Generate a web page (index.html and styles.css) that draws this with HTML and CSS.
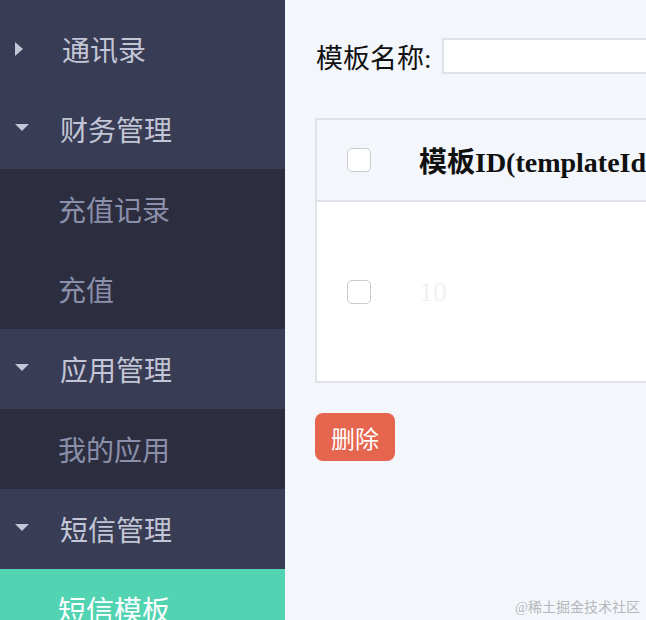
FILE: index.html
```html
<!DOCTYPE html>
<html lang="zh-CN">
<head>
    <meta charset="UTF-8">
    <title>短信模板</title>
    <link rel="stylesheet" href="styles.css">
</head>
<body>
    <div class="layout">
        <ul class="side-menu">
            <li class="menu-item"><span class="arrow arrow-right"></span>通讯录</li>
            <li class="menu-item"><span class="arrow arrow-down"></span>财务管理</li>
            <li class="sub-item">充值记录</li>
            <li class="sub-item">充值</li>
            <li class="menu-item"><span class="arrow arrow-down"></span>应用管理</li>
            <li class="sub-item">我的应用</li>
            <li class="menu-item"><span class="arrow arrow-down"></span>短信管理</li>
            <li class="sub-item active">短信模板</li>
        </ul>

        <div class="main">
            <div class="search-bar">
                <label class="search-label">模板名称:</label>
                <input class="search-input" type="text">
            </div>

            <table class="data-table">
                <thead>
                    <tr>
                        <th class="check-cell"><span class="checkbox"></span></th>
                        <th class="text-cell">模板ID(templateId)</th>
                    </tr>
                </thead>
                <tbody>
                    <tr>
                        <td class="check-cell"><span class="checkbox"></span></td>
                        <td class="text-cell id-cell">10</td>
                    </tr>
                </tbody>
            </table>

            <button class="del-btn">删除</button>

            <span class="watermark">@稀土掘金技术社区</span>
        </div>
    </div>
</body>
</html>
```

FILE: styles.css
```css
* {
    margin: 0;
    padding: 0;
    box-sizing: border-box;
}
ul,ol {
    list-style: none;
}
body {
    font-family: "Liberation Serif", "Noto Sans CJK SC", serif;
    background-color: #f3f6fa;
    overflow: hidden;
}
.layout {
    display: flex;
    height: 620px;
}

/* 左侧菜单 */
.side-menu {
    flex: 0 0 285px;
    padding-top: 9px;
    background-color: #383c54;
    font-family: "Noto Sans CJK SC", sans-serif;
    font-size: 28px;
}
.menu-item,.sub-item {
    display: flex;
    align-items: center;
    height: 80px;
}
.menu-item {
    padding-left: 15px;
    color: #c3c6d6;
    background-color: #383c54;
}
.sub-item {
    padding-left: 58px;
    color: #8b8fa9;
    background-color: #2c2e40;
}
.sub-item.active {
    color: #fff;
    background-color: #52d3b2;
}
.arrow {
    width: 0;
    height: 0;
    margin-right: 31px;
}
.arrow-right {
    margin-right: 39px;
    border-left: 8px solid #c3c6d6;
    border-top: 7px solid transparent;
    border-bottom: 7px solid transparent;
}
.arrow-down {
    border-top: 7px solid #c3c6d6;
    border-left: 7.5px solid transparent;
    border-right: 7.5px solid transparent;
    margin-top: -4px;
}

/* 右侧内容 */
.main {
    position: relative;
    flex: 1;
    padding: 38px 0 0 30px;
    overflow: hidden;
}
.search-bar {
    display: flex;
    align-items: center;
    height: 36px;
}
.search-label {
    font-size: 27px;
    color: #111;
    margin-left: 1px;
    margin-right: 10px;
    white-space: nowrap;
}
.search-input {
    flex: 0 0 260px;
    height: 36px;
    border: 2px solid #dfe3e9;
    background-color: #fff;
    outline: none;
}

.data-table {
    margin-top: 44px;
    width: 560px;
    border-collapse: collapse;
    border: 2px solid #dfe3e9;
}
.data-table th {
    height: 82px;
    background-color: #f3f6fa;
    border-bottom: 2px solid #dfe3e9;
    font-size: 28px;
    font-weight: bold;
    text-align: left;
    color: #111;
    white-space: nowrap;
}
.data-table td {
    height: 181px;
    background-color: #fff;
}
.check-cell {
    width: 103px;
    padding-left: 30px;
}
.checkbox {
    display: block;
    width: 24px;
    height: 24px;
    border: 1px solid #c9cbcf;
    border-radius: 5px;
    background-color: #fff;
}
.id-cell {
    font-size: 28px;
    color: #f0f1f3;
}

.del-btn {
    display: block;
    margin-top: 30px;
    width: 80px;
    height: 48px;
    border: none;
    border-radius: 8px;
    background-color: #e6654f;
    color: #fff;
    font-family: "Noto Sans CJK SC", sans-serif;
    font-size: 24px;
}

.watermark {
    position: absolute;
    right: 6px;
    bottom: 4px;
    font-size: 14px;
    color: #b5b8bd;
}
```
